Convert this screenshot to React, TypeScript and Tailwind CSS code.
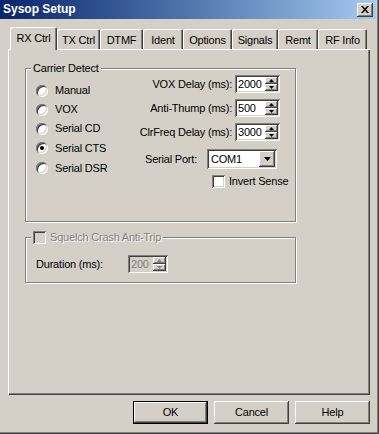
import React from "react";

const raised =
  "shadow-[inset_-1px_-1px_#404040,inset_1px_1px_#ffffff,inset_-2px_-2px_#808080,inset_2px_2px_#D4D0C8]";
const sunken =
  "shadow-[inset_1px_1px_#808080,inset_-1px_-1px_#ffffff,inset_2px_2px_#404040,inset_-2px_-2px_#D4D0C8]";
const etched =
  "border border-[#808080] shadow-[inset_1px_1px_#ffffff,1px_1px_#ffffff]";

function Arrow({ up, disabled }: { up?: boolean; disabled?: boolean }) {
  return (
    <svg width="5" height="3" viewBox="0 0 5 3" className="block">
      {up ? (
        <path d="M2.5 0 L5 3 L0 3 Z" fill={disabled ? "#808080" : "#000"} />
      ) : (
        <path d="M0 0 L5 0 L2.5 3 Z" fill={disabled ? "#808080" : "#000"} />
      )}
    </svg>
  );
}

function SpinBtn({ up, disabled }: { up?: boolean; disabled?: boolean }) {
  return (
    <div className={`flex-1 flex items-center justify-center bg-[#D4D0C8] ${raised}`}>
      <Arrow up={up} disabled={disabled} />
    </div>
  );
}

function Spin({ value, wide, disabled }: { value: string; wide?: boolean; disabled?: boolean }) {
  return (
    <div
      className={`flex shrink-0 h-[18px] p-[2px] ${wide ? "w-[45px]" : "w-[40px]"} ${
        disabled ? "bg-[#D4D0C8] text-[#808080]" : "bg-white text-black"
      } ${sunken}`}
    >
      <div className="flex-1 pl-[1px] leading-[14px]">{value}</div>
      <div className="flex flex-col w-[13px]">
        <SpinBtn up disabled={disabled} />
        <SpinBtn disabled={disabled} />
      </div>
    </div>
  );
}

function Radio({ label, checked }: { label: string; checked?: boolean }) {
  return (
    <div className="flex items-center">
      <div
        className={`w-[12px] h-[12px] rounded-full bg-white flex items-center justify-center shadow-[inset_1px_1px_#808080,inset_-1px_-1px_#ffffff,inset_2px_2px_#404040,inset_-2px_-2px_#D4D0C8]`}
      >
        {checked && <div className="w-[4px] h-[4px] rounded-full bg-black" />}
      </div>
      <span className="ml-[7px]">{label}</span>
    </div>
  );
}

function Checkbox({ disabled }: { disabled?: boolean }) {
  return (
    <div
      className={`w-[13px] h-[13px] shrink-0 ${disabled ? "bg-[#D4D0C8]" : "bg-white"} ${sunken}`}
    />
  );
}

const tabs = [
  { label: "RX Ctrl", w: "w-[47px]", sel: true },
  { label: "TX Ctrl", w: "w-[43px]" },
  { label: "DTMF", w: "w-[43px]" },
  { label: "Ident", w: "w-[40px]" },
  { label: "Options", w: "w-[49px]" },
  { label: "Signals", w: "w-[46px]" },
  { label: "Remt", w: "w-[40px]" },
  { label: "RF Info", w: "w-[49px]" },
];

const tabShadow =
  "shadow-[inset_1px_1px_#ffffff,inset_-1px_0_#404040,inset_-2px_0_#808080]";

function Button({ label, def }: { label: string; def?: boolean }) {
  if (def) {
    return (
      <div className="w-[75px] h-[23px] border border-black bg-[#D4D0C8]">
        <div className={`w-full h-full flex items-center justify-center ${raised}`}>{label}</div>
      </div>
    );
  }
  return (
    <div className={`w-[75px] h-[23px] flex items-center justify-center bg-[#D4D0C8] ${raised}`}>
      {label}
    </div>
  );
}

export default function App() {
  return (
    <div
      className={`w-[379px] h-[434px] bg-[#D4D0C8] pr-[3px] pb-[3px] text-[11px] leading-[13px] tracking-[-0.2px] text-black whitespace-nowrap font-['Liberation_Sans',Arial,sans-serif] shadow-[inset_-1px_-1px_#404040,inset_-2px_-2px_#808080] overflow-hidden`}
    >
      {/* Title bar */}
      <div className="h-[19px] bg-linear-to-r from-[#0A246A] to-[#A6CAF0] flex items-start justify-between pl-[3px] pr-[3px]">
        <div className="text-white font-bold text-[12px] leading-[19px] tracking-normal">Sysop Setup</div>
        <div className={`mt-[3px] w-[16px] h-[14px] bg-[#D4D0C8] flex items-center justify-center ${raised}`}>
          <svg width="8" height="7" viewBox="0 0 8 7" className="block -mt-[1px] -ml-[1px]">
            <path d="M0 0 H2 L4 2.5 L6 0 H8 L5 3.5 L8 7 H6 L4 4.5 L2 7 H0 L3 3.5 Z" fill="#000" />
          </svg>
        </div>
      </div>

      {/* Tabs */}
      <div className="mt-[8px] h-[22px] pl-[10px] flex items-end">
        {tabs.map((t) =>
          t.sel ? (
            <div
              key={t.label}
              className={`${t.w} h-[23px] -mb-[1px] relative z-10 bg-[#D4D0C8] rounded-tl-[2px] rounded-tr-[2px] flex items-center justify-center ${tabShadow}`}
            >
              {t.label}
            </div>
          ) : (
            <div
              key={t.label}
              className={`${t.w} h-[20px] bg-[#D4D0C8] rounded-tl-[2px] rounded-tr-[2px] flex items-center justify-center pt-[2px] ${tabShadow}`}
            >
              {t.label}
            </div>
          )
        )}
      </div>

      {/* Panel */}
      <div className="ml-[8px] w-[362px] h-[346px] shadow-[inset_1px_1px_#ffffff,inset_-1px_-1px_#404040,inset_-2px_-2px_#808080] pt-[19px] pl-[17px]">
        {/* Carrier Detect */}
        <div className={`w-[271px] h-[154px] ${etched}`}>
          <div className="-mt-[8px] h-[14px] leading-[14px]">
            <span className="ml-[5px] px-[2px] bg-[#D4D0C8] inline-block">Carrier Detect</span>
          </div>
          <div className="flex">
            <div className="w-[114px] shrink-0 pl-[10px] pt-[6px] flex flex-col">
              <div className="h-[19px] flex items-center"><Radio label="Manual" /></div>
              <div className="h-[19px] flex items-center"><Radio label="VOX" /></div>
              <div className="h-[19px] flex items-center"><Radio label="Serial CD" /></div>
              <div className="h-[20px] flex items-center"><Radio label="Serial CTS" checked /></div>
              <div className="h-[20px] flex items-center"><Radio label="Serial DSR" /></div>
            </div>
            <div className="w-[140px] shrink-0 flex flex-col">
              <div className="h-[18px] flex items-center justify-end">
                <span className="mr-[3px] shrink-0">VOX Delay (ms):</span>
                <Spin value="2000" wide />
              </div>
              <div className="mt-[6px] h-[18px] flex items-center justify-end">
                <span className="mr-[3px] shrink-0">Anti-Thump (ms):</span>
                <Spin value="500" wide />
              </div>
              <div className="mt-[6px] h-[18px] flex items-center justify-end">
                <span className="mr-[3px] shrink-0">ClrFreq Delay (ms):</span>
                <Spin value="3000" wide />
              </div>
              <div className="mt-[8px] h-[20px] flex items-center pl-[5px]">
                <span className="w-[62px] shrink-0">Serial Port:</span>
                <div className={`w-[70px] shrink-0 h-[20px] p-[2px] bg-white flex ${sunken}`}>
                  <div className="flex-1 pl-[2px] leading-[16px]">COM1</div>
                  <div className={`w-[16px] h-[16px] bg-[#D4D0C8] flex items-center justify-center ${raised}`}>
                    <svg width="7" height="4" viewBox="0 0 7 4" className="block">
                      <path d="M0 0 H7 L3.5 4 Z" fill="#000" />
                    </svg>
                  </div>
                </div>
              </div>
              <div className="mt-[6px] h-[13px] flex items-center pl-[72px]">
                <Checkbox />
                <span className="ml-[4px] shrink-0">Invert Sense</span>
              </div>
            </div>
          </div>
        </div>

        {/* Squelch Crash Anti-Trip */}
        <div className={`mt-[15px] w-[271px] h-[46px] ${etched}`}>
          <div className="-mt-[8px] h-[14px] leading-[14px]">
            <span className="ml-[5px] px-[2px] bg-[#D4D0C8] inline-flex items-center h-[14px]">
              <Checkbox disabled />
              <span className="ml-[4px] text-[#808080] [text-shadow:1px_1px_0_#ffffff]">
                Squelch Crash Anti-Trip
              </span>
            </span>
          </div>
          <div className="mt-[11px] h-[18px] pl-[10px] flex items-center">
            <span className="w-[92px]">Duration (ms):</span>
            <Spin value="200" disabled />
          </div>
        </div>
      </div>

      {/* Buttons */}
      <div className="mt-[6px] pr-[6px] flex justify-end gap-[6px]">
        <Button label="OK" def />
        <Button label="Cancel" />
        <Button label="Help" />
      </div>
    </div>
  );
}
